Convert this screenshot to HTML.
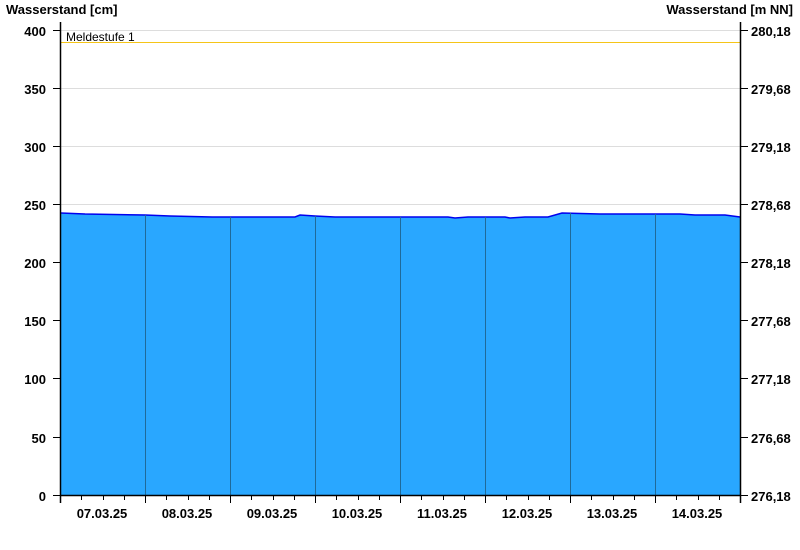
<!DOCTYPE html>
<html><head><style>body{margin:0;background:#fff}svg{display:block;font-family:"Liberation Sans",sans-serif}</style></head><body>
<svg width="800" height="550" viewBox="0 0 800 550">
<g font-size="13" font-weight="bold" fill="#000">
<text x="6" y="14">Wasserstand [cm]</text>
<text x="793" y="14" text-anchor="end">Wasserstand [m NN]</text>
</g>
<g stroke="#ddd" stroke-width="1">
<line x1="61" x2="740" y1="30.5" y2="30.5"/><line x1="61" x2="740" y1="88.5" y2="88.5"/><line x1="61" x2="740" y1="146.5" y2="146.5"/><line x1="61" x2="740" y1="204.5" y2="204.5"/>
</g>
<line x1="61" x2="740" y1="42.5" y2="42.5" stroke="#f5c518"/>
<text x="66" y="41" font-size="12" fill="#000">Meldestufe 1</text>
<polygon fill="#29a7ff" points="61,213 85,214 145,215 170,216 212,217 295,217 300,215 315,216 335,217 448,217 455,218 468,217 505,217 510,218 525,217 548,217 562,213 600,214 680,214 695,215 725,215 740,217 740,495 61,495"/>
<polyline fill="none" stroke="#0000ee" stroke-width="1.5" points="61,213 85,214 145,215 170,216 212,217 295,217 300,215 315,216 335,217 448,217 455,218 468,217 505,217 510,218 525,217 548,217 562,213 600,214 680,214 695,215 725,215 740,217"/>
<g stroke="#1f6a9a" stroke-width="1">
<line x1="145.5" x2="145.5" y1="215" y2="495"/><line x1="230.5" x2="230.5" y1="217" y2="495"/><line x1="315.5" x2="315.5" y1="216" y2="495"/><line x1="400.5" x2="400.5" y1="217" y2="495"/><line x1="485.5" x2="485.5" y1="217" y2="495"/><line x1="570.5" x2="570.5" y1="213" y2="495"/><line x1="655.5" x2="655.5" y1="214" y2="495"/>
</g>
<g stroke="#000" stroke-width="1.5">
<line x1="60.5" x2="60.5" y1="22" y2="503"/><line x1="740.5" x2="740.5" y1="22" y2="503"/><line x1="60" x2="741" y1="495.5" y2="495.5"/>
</g>
<g stroke="#000" stroke-width="1">
<path d="M53 30.5H60M53 88.5H60M53 146.5H60M53 204.5H60M53 262.5H60M53 320.5H60M53 378.5H60M53 437.5H60M53 495.5H60"/>
<path d="M741 30.5H748M741 88.5H748M741 146.5H748M741 204.5H748M741 262.5H748M741 320.5H748M741 378.5H748M741 437.5H748M741 495.5H748"/>
<path d="M145.5 495V503M230.5 495V503M315.5 495V503M400.5 495V503M485.5 495V503M570.5 495V503M655.5 495V503"/>
<path d="M81.5 495V500M103.5 495V500M124.5 495V500M166.5 495V500M188.5 495V500M209.5 495V500M251.5 495V500M273.5 495V500M294.5 495V500M336.5 495V500M358.5 495V500M379.5 495V500M421.5 495V500M443.5 495V500M464.5 495V500M506.5 495V500M528.5 495V500M549.5 495V500M591.5 495V500M613.5 495V500M634.5 495V500M676.5 495V500M698.5 495V500M719.5 495V500"/>
</g>
<g font-size="13" font-weight="bold" fill="#000" text-anchor="end">
<text x="46" y="36">400</text><text x="46" y="94">350</text><text x="46" y="152">300</text><text x="46" y="210">250</text><text x="46" y="268">200</text><text x="46" y="326">150</text><text x="46" y="384">100</text><text x="46" y="443">50</text><text x="46" y="501">0</text>
</g>
<g font-size="13" font-weight="bold" fill="#000">
<text x="751" y="36">280,18</text><text x="751" y="94">279,68</text><text x="751" y="152">279,18</text><text x="751" y="210">278,68</text><text x="751" y="268">278,18</text><text x="751" y="326">277,68</text><text x="751" y="384">277,18</text><text x="751" y="443">276,68</text><text x="751" y="501">276,18</text>
</g>
<g font-size="13" font-weight="bold" fill="#000" text-anchor="middle">
<text x="102" y="518">07.03.25</text><text x="187" y="518">08.03.25</text><text x="272" y="518">09.03.25</text><text x="357" y="518">10.03.25</text><text x="442" y="518">11.03.25</text><text x="527" y="518">12.03.25</text><text x="612" y="518">13.03.25</text><text x="697" y="518">14.03.25</text>
</g>
</svg>
</body></html>
